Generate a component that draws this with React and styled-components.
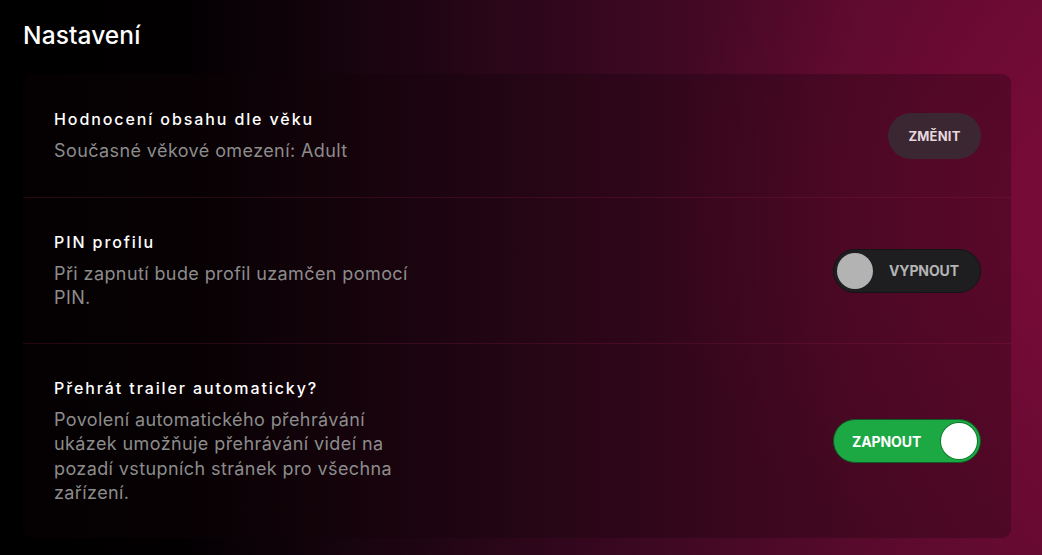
import styled, { createGlobalStyle } from "styled-components";

const GlobalStyle = createGlobalStyle`
  html, body {
    margin: 0;
    padding: 0;
    height: 100%;
  }
  body {
    font-family: "Inter", "Noto Sans", sans-serif;
    background: #000;
  }
`;

const Page = styled.div`
  width: 1042px;
  height: 555px;
  overflow: hidden;
  box-sizing: border-box;
  padding: 19px 31px 0 23px;
  background:
    radial-gradient(ellipse 420px 380px at 1080px 210px, rgba(140, 12, 62, 0.5), rgba(140, 12, 62, 0) 100%),
    linear-gradient(90deg, #000 0%, #030002 18%, #1c0511 38%, #3c0822 62%, #580a2c 82%, #660a31 100%);
`;

const Heading = styled.h1`
  margin: 0 0 23px;
  font-size: 24.5px;
  font-weight: 500;
  line-height: 32px;
  color: #fff;
  letter-spacing: 0.1px;
`;

const Panel = styled.section`
  border-radius: 9px;
  background: rgba(18, 2, 8, 0.28);
  padding: 0 30px 0 31px;
`;

const Row = styled.div`
  display: flex;
  align-items: center;
  justify-content: space-between;
  height: ${(p) => p.$h}px;
  box-sizing: border-box;
  border-top: ${(p) => (p.$first ? "none" : "1px solid rgba(160, 30, 80, 0.22)")};
  margin: 0 -30px 0 -31px;
  padding: 0 30px 0 31px;
`;

const Text = styled.div`
  display: flex;
  flex-direction: column;
  gap: 9px;
`;

const Title = styled.div`
  font-size: 16px;
  font-weight: 500;
  line-height: 22px;
  letter-spacing: 1.9px;
  color: #fff;
`;

const Desc = styled.div`
  max-width: 366px;
  font-size: 18px;
  line-height: 24.5px;
  letter-spacing: 0.4px;
  color: #8c8c8c;
`;

const PillButton = styled.button`
  width: 93px;
  height: 46px;
  border: none;
  border-radius: 23px;
  background: rgba(58, 42, 50, 0.92);
  color: #e6d8de;
  font-family: inherit;
  font-size: 13px;
  font-weight: 700;
  letter-spacing: 0.2px;
  cursor: pointer;
`;

const Toggle = styled.button`
  display: flex;
  align-items: center;
  flex-direction: ${(p) => (p.$on ? "row" : "row-reverse")};
  justify-content: space-between;
  width: 148px;
  height: 44px;
  box-sizing: border-box;
  padding: ${(p) => (p.$on ? "0 3px 0 18px" : "0 21px 0 3px")};
  border: 1px solid ${(p) => (p.$on ? "#0f5a24" : "#141416")};
  border-radius: 22px;
  background: ${(p) => (p.$on ? "#1ca843" : "#1e1e21")};
  color: ${(p) => (p.$on ? "#fff" : "#b4b4b4")};
  font-family: inherit;
  font-size: 14px;
  font-weight: 700;
  letter-spacing: -0.1px;
  cursor: pointer;
`;

const Knob = styled.span`
  width: 36px;
  height: 36px;
  border-radius: 50%;
  background: ${(p) => (p.$on ? "#fff" : "#b3b3b3")};
  box-shadow: ${(p) => (p.$on ? "0 0 0 1px #0f7a2c" : "none")};
`;

export default function App() {
  return (
    <Page>
      <GlobalStyle />
      <Heading>Nastavení</Heading>
      <Panel>
        <Row $first $h={123}>
          <Text>
            <Title>Hodnocení obsahu dle věku</Title>
            <Desc>Současné věkové omezení: Adult</Desc>
          </Text>
          <PillButton>ZMĚNIT</PillButton>
        </Row>
        <Row $h={146}>
          <Text>
            <Title>PIN profilu</Title>
            <Desc>Při zapnutí bude profil uzamčen pomocí PIN.</Desc>
          </Text>
          <Toggle>
            VYPNOUT
            <Knob />
          </Toggle>
        </Row>
        <Row $h={195}>
          <Text>
            <Title>Přehrát trailer automaticky?</Title>
            <Desc>
              Povolení automatického přehrávání ukázek umožňuje přehrávání
              videí na pozadí vstupních stránek pro všechna zařízení.
            </Desc>
          </Text>
          <Toggle $on>
            ZAPNOUT
            <Knob $on />
          </Toggle>
        </Row>
      </Panel>
    </Page>
  );
}
